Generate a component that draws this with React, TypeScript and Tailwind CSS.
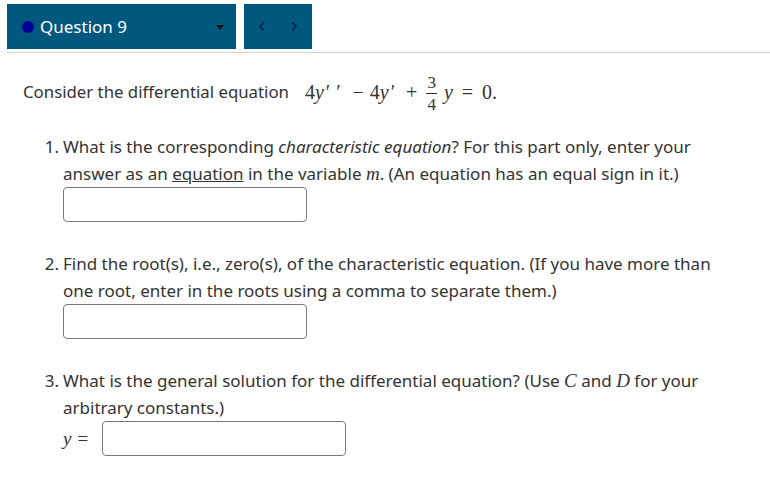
const serif = "font-['Liberation_Serif',serif]";

const Frac = ({ n, d }: { n: string; d: string }) => (
  <span className="inline-flex flex-col items-center align-middle ml-[5px] mr-[7px] leading-none text-[17px] relative top-[1px]">
    <span className="px-[1px] pb-[2px]">{n}</span>
    <span className="px-[1px] pt-[2px] border-t border-[#333]">{d}</span>
  </span>
);

const AnswerBox = () => (
  <div className="w-[244px] h-[35px] border border-[#7a7a7a] rounded-[4px] bg-white" />
);

export default function App() {
  return (
    <div className="w-[770px] h-[485px] bg-white font-['Noto_Sans',sans-serif] text-[#333] overflow-hidden">
      <div className="flex gap-2 pt-1 pl-[7px]">
        <div className="w-[229px] h-[45px] bg-[#00587f] flex items-center pl-[15px] pr-[12px]">
          <span className="w-3 h-3 rounded-full bg-[#000099]" />
          <span className="ml-[6px] text-white text-[17px] flex-1">Question 9</span>
          <span className="w-0 h-0 border-l-[4px] border-r-[4px] border-t-[5px] border-l-transparent border-r-transparent border-t-[#111] mt-[2px]" />
        </div>
        <div className="w-[68px] h-[45px] bg-[#00587f] flex items-center justify-between px-[14px] text-[#0b1d4a]">
          <svg width="8" height="11" viewBox="0 0 8 11"><path d="M6 1.5 L2 5.5 L6 9.5" fill="none" stroke="currentColor" strokeWidth="1.7" /></svg>
          <svg width="8" height="11" viewBox="0 0 8 11"><path d="M2 1.5 L6 5.5 L2 9.5" fill="none" stroke="currentColor" strokeWidth="1.7" /></svg>
        </div>
      </div>
      <div className="ml-[7px] mt-[3px] border-t border-[#cfcfcf]" />

      <div className="pl-[23px] pt-[19px] text-[16.8px]">
        <p className="flex items-center h-[40px]">
          <span>Consider the differential equation</span>
          <span className={`${serif} ml-[16px] text-[20px] flex items-center`}>
            <span>4<i>y</i><span className="tracking-[6px] ml-[2px]">&#8242;&#8242;</span></span>
            <span className="mx-[6px]">&minus;</span>
            <span>4<i>y</i><span className="ml-[2px]">&#8242;</span></span>
            <span className="ml-[11px] mr-[4px]">+</span>
            <Frac n="3" d="4" />
            <i>y</i>
            <span className="mx-[9px]">=</span>
            <span>0.</span>
          </span>
        </p>

        <ol className="mt-[21px] leading-[27px] text-[17px]">
          <li className="flex">
            <span className="w-[40px] shrink-0 text-right pr-[4px]">1.</span>
            <div>
              <p className="w-[640px]">
                What is the corresponding <i>characteristic equation</i>? For this part only, enter your answer as an <u>equation</u> in the variable <i className={`${serif} text-[19px]`}>m</i>. (An equation has an equal sign in it.)
              </p>
              <AnswerBox />
            </div>
          </li>
          <li className="flex mt-[28px]">
            <span className="w-[40px] shrink-0 text-right pr-[4px]">2.</span>
            <div>
              <p className="w-[650px]">
                Find the root(s), i.e., zero(s), of the characteristic equation. (If you have more than one root, enter in the roots using a comma to separate them.)
              </p>
              <AnswerBox />
            </div>
          </li>
          <li className="flex mt-[28px]">
            <span className="w-[40px] shrink-0 text-right pr-[4px]">3.</span>
            <div>
              <p className="w-[640px]">
                What is the general solution for the differential equation? (Use <i className={`${serif} text-[19px]`}>C</i> and <i className={`${serif} text-[19px]`}>D</i> for your arbitrary constants.)
              </p>
              <div className="flex items-center">
                <span className={`${serif} text-[19px] w-[39px] flex items-center`}>
                  <i>y</i>
                  <span className="ml-[6px]">=</span>
                </span>
                <AnswerBox />
              </div>
            </div>
          </li>
        </ol>
      </div>
    </div>
  );
}
